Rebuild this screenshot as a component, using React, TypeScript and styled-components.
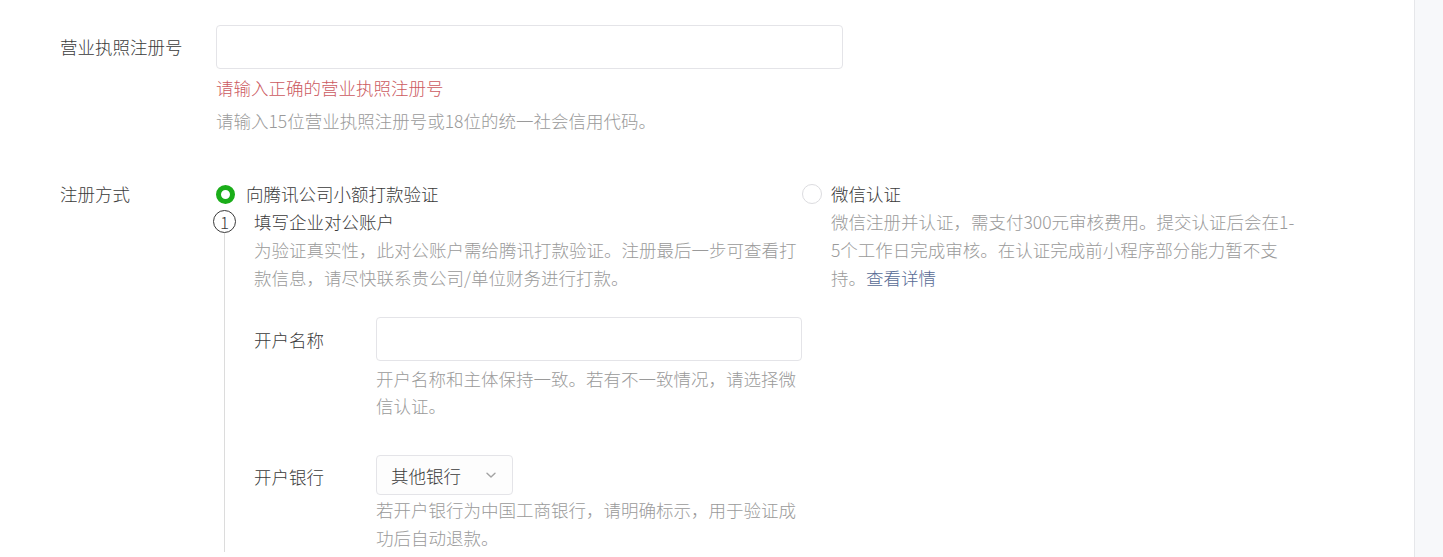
import React from 'react';
import styled, { createGlobalStyle } from 'styled-components';

const GlobalStyle = createGlobalStyle`
  html, body {
    margin: 0;
    padding: 0;
    background: #ffffff;
  }
  body {
    font-family: "Noto Sans CJK SC", "Noto Sans", "Liberation Sans", sans-serif;
    font-size: 17.5px;
    font-weight: 300;
    color: #3a3a3a;
  }
  * {
    box-sizing: border-box;
  }
`;

const App = () => {
  return (
    <>
      <GlobalStyle />
      <Page>
        <Main>
          <FormRow>
            <Label>营业执照注册号</Label>
            <Field>
              <TextInput width={627} />
              <ErrorTip>请输入正确的营业执照注册号</ErrorTip>
              <Tip>请输入15位营业执照注册号或18位的统一社会信用代码。</Tip>
            </Field>
          </FormRow>

          <MethodRow>
            <MethodLabel>注册方式</MethodLabel>
            <Options>
              <LeftOption>
                <RadioLine gap={11}>
                  <Radio checked />
                  <span>向腾讯公司小额打款验证</span>
                </RadioLine>
                <Step>
                  <StepRail>
                    <StepNum>1</StepNum>
                    <StepLine />
                  </StepRail>
                  <StepBody>
                    <StepTitle>填写企业对公账户</StepTitle>
                    <Desc>
                      为验证真实性，此对公账户需给腾讯打款验证。注册最后一步可查看打款信息，请尽快联系贵公司/单位财务进行打款。
                    </Desc>

                    <SubRow>
                      <SubLabel>开户名称</SubLabel>
                      <Field>
                        <TextInput width={426} />
                        <SubTip>开户名称和主体保持一致。若有不一致情况，请选择微信认证。</SubTip>
                      </Field>
                    </SubRow>

                    <SubRow top={36}>
                      <SubLabel small>开户银行</SubLabel>
                      <Field>
                        <Select>
                          <span>其他银行</span>
                          <svg width="14" height="14" viewBox="0 0 14 14" fill="none">
                            <path d="M3 5.2 L7 9 L11 5.2" stroke="#a3a3a3" strokeWidth="1.4" strokeLinecap="round" strokeLinejoin="round" />
                          </svg>
                        </Select>
                        <SelectTip>若开户银行为中国工商银行，请明确标示，用于验证成功后自动退款。</SelectTip>
                      </Field>
                    </SubRow>
                  </StepBody>
                </Step>
              </LeftOption>

              <RightOption>
                <RadioLine gap={9}>
                  <Radio />
                  <span>微信认证</span>
                </RadioLine>
                <RightDesc>
                  微信注册并认证，需支付300元审核费用。提交认证后会在1-5个工作日完成审核。在认证完成前小程序部分能力暂不支持。<Link>查看详情</Link>
                </RightDesc>
              </RightOption>
            </Options>
          </MethodRow>
        </Main>
        <SideStrip />
      </Page>
    </>
  );
};

export default App;

const Page = styled.div`
  display: flex;
  width: 100%;
  height: 557px;
  overflow: hidden;
`;

const Main = styled.div`
  flex: 1;
  padding: 25px 0 0 60px;
`;

const SideStrip = styled.div`
  width: 29px;
  flex-shrink: 0;
  background: #f7f8fa;
  border-left: 1px solid #e6e7ea;
`;

const FormRow = styled.div`
  display: grid;
  grid-template-columns: 156px 1fr;
`;

const MethodRow = styled(FormRow)`
  margin-top: 45px;
`;

const Label = styled.div`
  line-height: 44px;
  color: #3a3a3a;
`;

const MethodLabel = styled(Label)`
  line-height: 28px;
`;

const Field = styled.div`
  display: flex;
  flex-direction: column;
`;

const TextInput = styled.div<{ width: number }>`
  width: ${(props) => props.width}px;
  height: 44px;
  border: 1px solid #e4e4e8;
  border-radius: 4px;
  background: #ffffff;
`;

const ErrorTip = styled.div`
  margin-top: 5px;
  line-height: 28px;
  color: #cc5a5f;
`;

const Tip = styled.div`
  margin-top: 5px;
  line-height: 28px;
  color: #9a9a9a;
`;

const Options = styled.div`
  display: flex;
`;

const LeftOption = styled.div`
  width: 586px;
  display: flex;
  flex-direction: column;
`;

const RightOption = styled.div`
  display: flex;
  flex-direction: column;
`;

const RadioLine = styled.div<{ gap: number }>`
  display: flex;
  align-items: center;
  gap: ${(props) => props.gap}px;
  line-height: 28px;
  color: #3a3a3a;
`;

const Radio = styled.span<{ checked?: boolean }>`
  display: inline-block;
  width: ${(props) => (props.checked ? 19 : 20)}px;
  height: ${(props) => (props.checked ? 19 : 20)}px;
  border-radius: 50%;
  background: #ffffff;
  border: ${(props) => (props.checked ? '5px solid #1aad19' : '1px solid #dcdcdf')};
`;

const Step = styled.div`
  display: flex;
  margin-left: -3px;
`;

const StepRail = styled.div`
  width: 23px;
  display: flex;
  flex-direction: column;
  align-items: center;
  padding-top: 2px;
`;

const StepNum = styled.div`
  width: 23px;
  height: 23px;
  border: 1px solid #3a3a3a;
  border-radius: 50%;
  display: flex;
  align-items: center;
  justify-content: center;
  font-size: 17px;
  line-height: 1;
  color: #3a3a3a;
`;

const StepLine = styled.div`
  width: 1px;
  flex: 1;
  height: 400px;
  background: #dcdcdc;
`;

const StepBody = styled.div`
  margin-left: 18px;
  display: flex;
  flex-direction: column;
`;

const StepTitle = styled.div`
  line-height: 28px;
  color: #3a3a3a;
`;

const Desc = styled.div`
  width: 548px;
  line-height: 28px;
  color: #9a9a9a;
`;

const SubRow = styled.div<{ top?: number }>`
  display: grid;
  grid-template-columns: 122px 1fr;
  margin-top: ${(props) => props.top ?? 25}px;
`;

const SubLabel = styled.div<{ small?: boolean }>`
  line-height: ${(props) => (props.small ? 40 : 44)}px;
  margin-top: ${(props) => (props.small ? 2 : 1)}px;
  color: #3a3a3a;
`;

const SubTip = styled.div`
  width: 430px;
  margin-top: 4px;
  line-height: 27px;
  color: #9a9a9a;
`;

const Select = styled.div`
  width: 137px;
  height: 40px;
  padding: 0 14px;
  display: flex;
  align-items: center;
  justify-content: space-between;
  border: 1px solid #e4e4e8;
  border-radius: 4px;
  background: #fdfdfd;
  color: #3a3a3a;
`;

const SelectTip = styled.div`
  width: 430px;
  margin-top: 1px;
  line-height: 28px;
  color: #9a9a9a;
`;

const RightDesc = styled.div`
  width: 498px;
  padding-left: 29px;
  line-height: 28px;
  color: #9a9a9a;
`;

const Link = styled.span`
  color: #576b95;
  cursor: pointer;
`;
